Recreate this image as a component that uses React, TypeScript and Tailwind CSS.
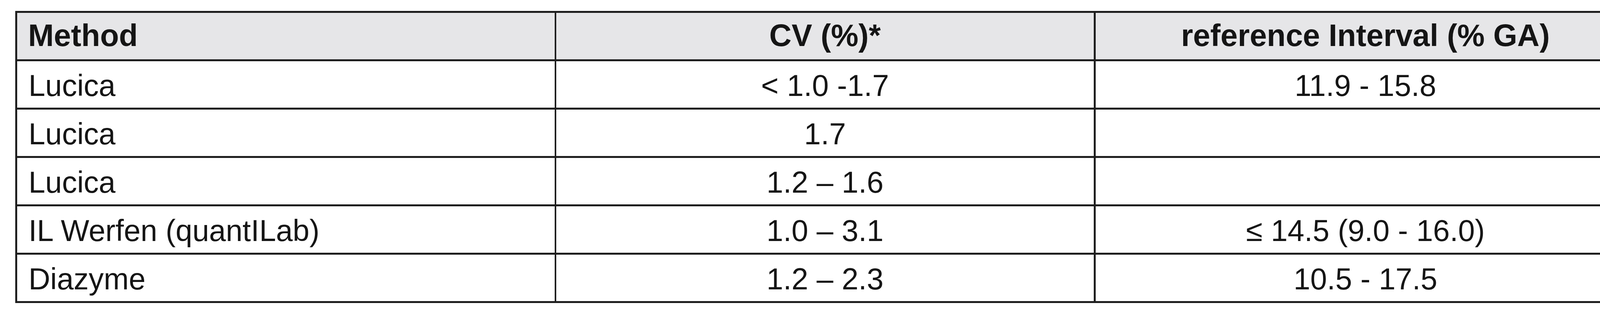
import React from "react";

const rows: [string, string, string][] = [
  ["Lucica", "< 1.0 -1.7", "11.9 - 15.8"],
  ["Lucica", "1.7", ""],
  ["Lucica", "1.2 – 1.6", ""],
  ["IL Werfen (quantILab)", "1.0 – 3.1", "≤ 14.5 (9.0 - 16.0)"],
  ["Diazyme", "1.2 – 2.3", "10.5 - 17.5"],
];

export default function App() {
  return (
    <div
      className="w-[4287px] h-[800px] bg-white pt-[28px] pl-[39px] text-[#151515]"
      style={{ fontFamily: '"Liberation Sans", Arial, sans-serif' }}
    >
      <div className="w-[4152px] border-[5px] border-[#1e1e1e]">
        <div className="grid grid-cols-[1380px_1381px_1381px] h-[124px] border-b-[5px] border-[#1e1e1e] bg-[#e6e6e8] font-bold text-[79px] leading-none">
          <div className="flex items-center pl-[28px] pb-[4px] border-r-[4px] border-[#1e1e1e]">Method</div>
          <div className="flex items-center justify-center pb-[4px] border-r-[5px] border-[#1e1e1e]">CV (%)*</div>
          <div className="flex items-center justify-center pb-[4px]">reference Interval (% GA)</div>
        </div>
        {rows.map((r, i) => (
          <div
            key={i}
            className={
              "grid grid-cols-[1380px_1381px_1381px] text-[77px] leading-none " +
              (i < rows.length - 1 ? "h-[124px] border-b-[5px] border-[#1e1e1e]" : "h-[119px]")
            }
          >
            <div className="flex items-center pl-[29px] pt-[5px] border-r-[4px] border-[#1e1e1e]">{r[0]}</div>
            <div className="flex items-center justify-center pt-[5px] border-r-[5px] border-[#1e1e1e]">{r[1]}</div>
            <div className="flex items-center justify-center pt-[5px]">{r[2]}</div>
          </div>
        ))}
      </div>
    </div>
  );
}
